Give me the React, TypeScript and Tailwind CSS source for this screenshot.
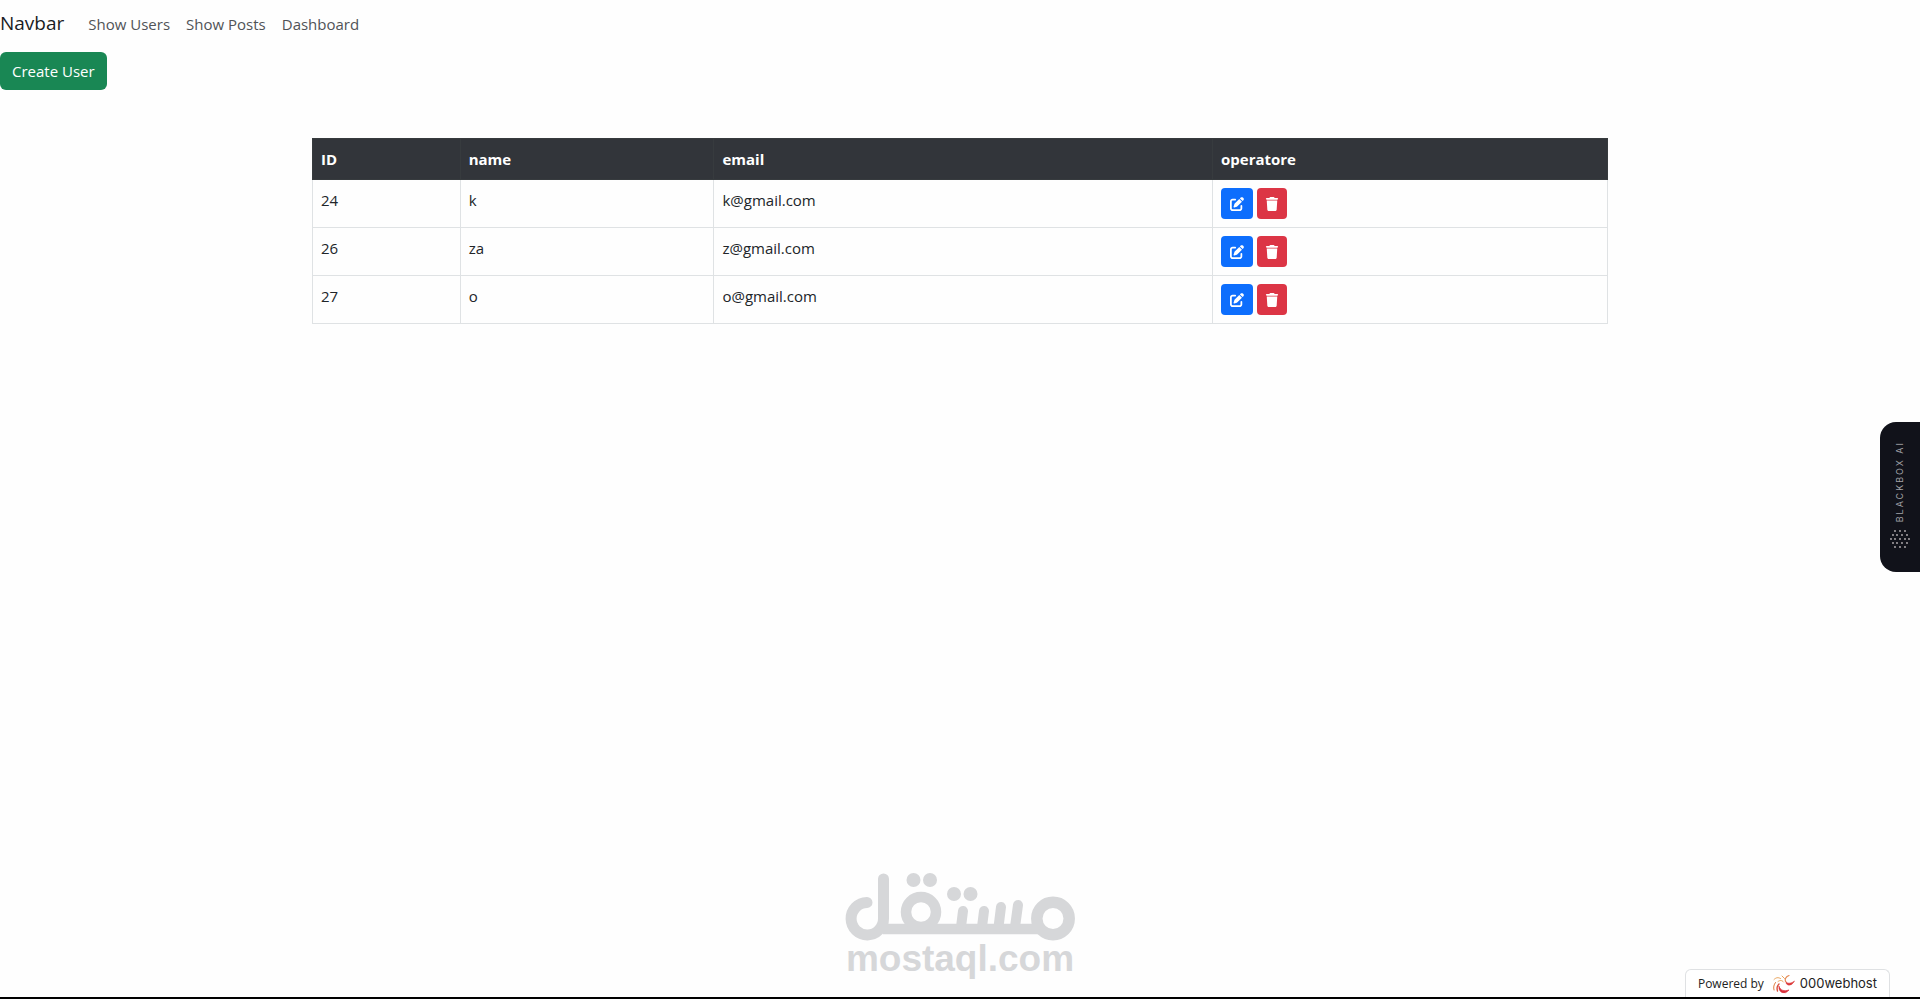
import { FaPenToSquare, FaTrash } from 'react-icons/fa6';

interface User {
  id: number;
  name: string;
  email: string;
}

const users: User[] = [
  { id: 24, name: 'k', email: 'k@gmail.com' },
  { id: 26, name: 'za', email: 'z@gmail.com' },
  { id: 27, name: 'o', email: 'o@gmail.com' },
];

const links = ['Show Users', 'Show Posts', 'Dashboard'];

function Navbar() {
  return (
    <nav className="flex items-center gap-6 h-12 pb-px">
      <a href="#" className="text-[19px] text-[#1a1c1f]">Navbar</a>
      <ul className="flex items-center gap-4">
        {links.map((link) => (
          <li key={link}><a href="#" className="text-[15px] text-[#505357]">{link}</a></li>
        ))}
      </ul>
    </nav>
  );
}

function UserTable() {
  return (
    <table className="w-full table-fixed border-collapse text-left text-[15px] leading-6 text-[#212529]">
      <thead className="bg-[#32353a] text-white">
        <tr>
          <th className="w-[11.4%] border border-[#373b3e] p-2">ID</th>
          <th className="w-[19.6%] border border-[#373b3e] p-2">name</th>
          <th className="w-[38.5%] border border-[#373b3e] p-2">email</th>
          <th className="border border-[#373b3e] p-2">operatore</th>
        </tr>
      </thead>
      <tbody>
        {users.map((user) => (
          <tr key={user.id} className="align-top">
            <td className="border border-[#dfe2e4] p-2">{user.id}</td>
            <td className="border border-[#dfe2e4] p-2">{user.name}</td>
            <td className="border border-[#dfe2e4] p-2">{user.email}</td>
            <td className="border border-[#dfe2e4] p-2">
              <div className="flex gap-1">
                <button type="button" aria-label="Edit" className="flex items-center h-[31px] px-[9px] rounded bg-[#0d6efd] text-white"><FaPenToSquare size={14} /></button>
                <button type="button" aria-label="Delete" className="flex items-center h-[31px] px-2 rounded bg-[#dc3545] text-white"><FaTrash size={14} /></button>
              </div>
            </td>
          </tr>
        ))}
      </tbody>
    </table>
  );
}

function MostaqlLogo() {
  return (
    <div className="flex flex-col items-center text-[#d6d7d9]">
      <svg width="230" height="68" viewBox="0 0 230 68" fill="none" stroke="currentColor" strokeLinecap="round">
        <path d="M22 29.5A16.2 16.2 0 1 0 38.5 45.5V6" strokeWidth="11" />
        <path d="M38 56H196" strokeWidth="10.5" strokeLinecap="butt" />
        <circle cx="76" cy="39" r="15" strokeWidth="10.5" />
        <circle cx="208" cy="45.5" r="16.2" strokeWidth="11.5" />
        <path d="M118 38L116 54M139 38L137 54M156 34L153.5 54M173 32L170 54" strokeWidth="10" />
        <g fill="currentColor" stroke="none">
          <circle cx="68.5" cy="7" r="7" />
          <circle cx="85" cy="7" r="7" />
          <circle cx="109" cy="21" r="7" />
          <circle cx="125.5" cy="21" r="7" />
        </g>
      </svg>
      <span className="font-['Liberation_Sans',sans-serif] text-[37px] leading-9 font-bold">mostaql.com</span>
    </div>
  );
}

function BlackboxTab() {
  const rows = [
    { y: 1, xs: [5, 10, 15] },
    { y: 5, xs: [3, 7, 12, 17] },
    { y: 9, xs: [1, 5, 10, 15, 19] },
    { y: 13, xs: [3, 7, 12, 17] },
    { y: 17, xs: [5, 10, 15] },
  ];
  return (
    <button type="button" className="fixed right-0 top-[422px] flex flex-col items-center justify-end gap-2 w-10 h-[150px] pb-6 rounded-l-2xl bg-[#11121a] text-[#a3a3a8]">
      <span className="[writing-mode:vertical-rl] rotate-180 font-['Inter',sans-serif] text-[9px] leading-3 tracking-[2px] whitespace-nowrap">BLACKBOX AI</span>
      <svg width="20" height="18" viewBox="0 0 20 18" fill="#b9b4b6">
        {rows.map((row) => row.xs.map((x) => <circle key={`${row.y}-${x}`} cx={x} cy={row.y} r="0.9" />))}
      </svg>
    </button>
  );
}

function PoweredBy() {
  return (
    <a href="#" className="fixed bottom-0.5 right-[30px] flex items-center gap-2 h-7 px-3 rounded-t-md border border-b-0 border-[#dfe1e3] bg-white text-xs text-[#222]">
      Powered by
      <span className="flex items-center gap-1 font-['Inter',sans-serif] text-[13px]">
        <svg width="24" height="20" viewBox="0 0 24 20" fill="none" strokeLinecap="round">
          <path d="M2 16C1.200 13 1.800 11 3.500 8.500" stroke="#e07a3c" strokeWidth="1" />
          <path d="M5.500 17C4.500 14 5 12 7 10" stroke="#d9503c" strokeWidth="1.400" />
          <path d="M2 5.500C4 3.500 6 3 8.500 4.500M6 7.500C8 6 10 6 11.500 8M10 2L12.500 4.500" stroke="#e9a35a" strokeWidth="1" />
          <path d="M14 8C16 10 19.500 9.500 22.500 7Q20 12 16 11Q13.500 10 14 8Z" fill="#dc3a3a" stroke="#dc3a3a" strokeWidth="0.600" />
          <path d="M13.500 7.500C12.500 5 14 2.500 17 1.500" stroke="#e58a55" strokeWidth="1.200" />
          <path d="M7 12.500C8.500 16.500 12 17.500 17 16Q14 20 10 18.500Q6.500 16.500 7 12.500Z" fill="#d9303c" stroke="#d9303c" strokeWidth="0.700" />
        </svg>
        000webhost
      </span>
    </a>
  );
}

export default function App() {
  return (
    <div className="flex flex-col min-h-screen bg-[#fefefe] border-b-2 border-black font-['Open_Sans',sans-serif]">
      <Navbar />
      <main className="pt-1">
        <button type="button" className="h-[38px] px-3 rounded-md bg-[#198754] text-[15px] text-white">Create User</button>
        <div className="max-w-[1320px] mx-auto mt-12 px-3">
          <UserTable />
        </div>
      </main>
      <footer className="flex justify-center mt-auto pb-5">
        <MostaqlLogo />
      </footer>
      <BlackboxTab />
      <PoweredBy />
    </div>
  );
}
